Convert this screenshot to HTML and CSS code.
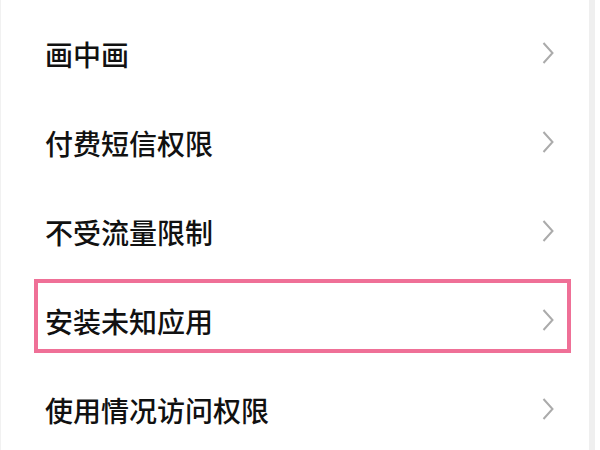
FILE: index.html
```html
<!DOCTYPE html>
<html lang="zh-CN">
<head>
<meta charset="utf-8">
<link rel="stylesheet" href="styles.css">
</head>
<body>
<div class="screen">
  <ul class="list">
    <li class="item"><span class="label">画中画</span><svg class="chev" viewBox="0 0 12 22" width="12" height="22"><polyline points="1.5,1 10.5,11 1.5,21"/></svg></li>
    <li class="item"><span class="label">付费短信权限</span><svg class="chev" viewBox="0 0 12 22" width="12" height="22"><polyline points="1.5,1 10.5,11 1.5,21"/></svg></li>
    <li class="item"><span class="label">不受流量限制</span><svg class="chev" viewBox="0 0 12 22" width="12" height="22"><polyline points="1.5,1 10.5,11 1.5,21"/></svg></li>
    <li class="item hl"><span class="label">安装未知应用</span><svg class="chev" viewBox="0 0 12 22" width="12" height="22"><polyline points="1.5,1 10.5,11 1.5,21"/></svg></li>
    <li class="item"><span class="label">使用情况访问权限</span><svg class="chev" viewBox="0 0 12 22" width="12" height="22"><polyline points="1.5,1 10.5,11 1.5,21"/></svg></li>
  </ul>
  <div class="scrollbar"></div>
</div>
</body>
</html>
```

FILE: styles.css
```css
html, body {
  margin: 0;
  padding: 0;
  background: #ffffff;
}
.screen {
  display: flex;
  width: 600px;
  height: 450px;
  overflow: hidden;
  background: #ffffff;
}
.list {
  list-style: none;
  margin: 0;
  padding: 9px 0 0 0;
  width: 589px;
  border-left: 1px solid #f1f1f1;
  box-sizing: border-box;
}
.item {
  position: relative;
  display: flex;
  align-items: center;
  justify-content: space-between;
  height: 89px;
  padding: 0 35px 0 44px;
  box-sizing: border-box;
}
.label {
  font-family: "Noto Sans CJK SC", "Noto Sans", sans-serif;
  font-size: 28px;
  font-weight: 500;
  line-height: 1;
  color: #111111;
}
.chev {
  display: block;
  margin-top: -2px;
  fill: none;
  stroke: #ababab;
  stroke-width: 2;
}
.item.hl::after {
  content: "";
  position: absolute;
  left: 33px;
  top: 3px;
  width: 537px;
  height: 74px;
  border: 4px solid #ef7097;
  box-sizing: border-box;
}
.scrollbar {
  width: 6px;
  height: 450px;
  background: #efefef;
}
```
